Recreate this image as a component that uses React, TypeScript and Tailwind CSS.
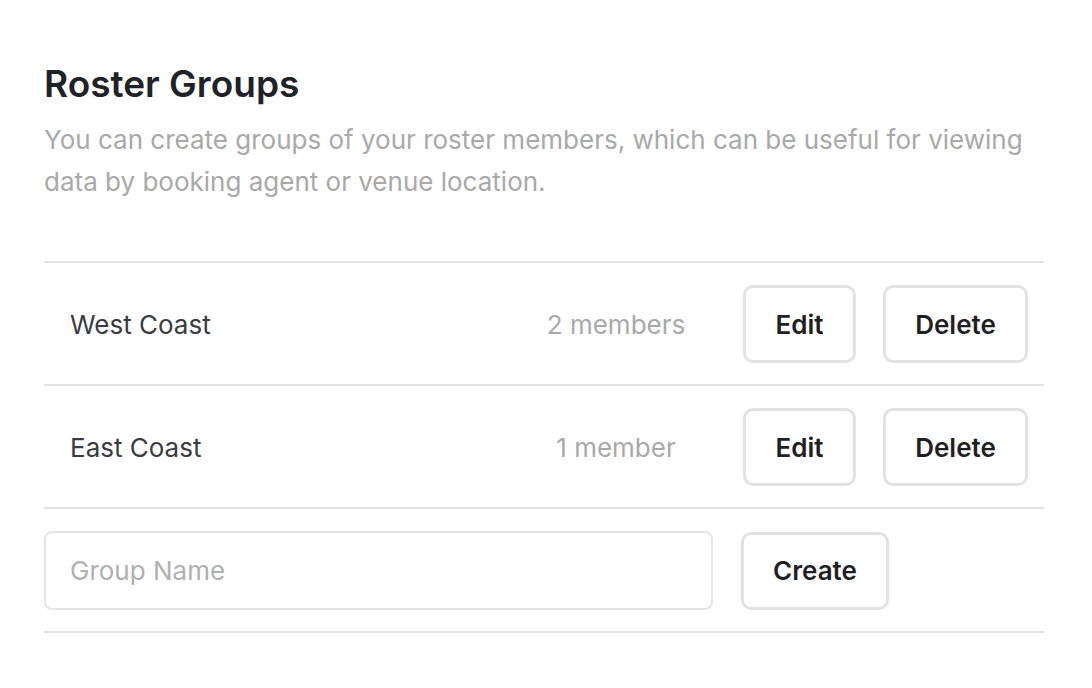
const groups = [
	{ name: "West Coast", count: "2 members" },
	{ name: "East Coast", count: "1 member" },
];

const btn =
	"h-[78px] rounded-[10px] border-[3px] border-[#e2e2e2] bg-white text-[26px] font-semibold text-[#1f2024]";

export default function App() {
	return (
		<div
			className="min-h-screen bg-white px-[44px] pt-[58px]"
			style={{ fontFamily: "Inter, 'Noto Sans', sans-serif" }}
		>
			<div className="w-[1000px]">
				<h1 className="text-[37px] font-semibold leading-[52px] text-[#1f2227]">
					Roster Groups
				</h1>
				<p className="mt-[9px] text-[26px] leading-[42px] text-[#a9a9a9]">
					You can create groups of your roster members, which can be useful for
					viewing data by booking agent or venue location.
				</p>

				<div className="mt-[58px] border-t-2 border-[#e3e3e3]">
					{groups.map((g) => (
						<div
							key={g.name}
							className="flex items-center border-b-2 border-[#e3e3e3] pb-[21px] pl-[26px] pr-[16px] pt-[22px]"
						>
							<div className="flex-1 text-[26px] text-[#3a3b42]">{g.name}</div>
							<div className="w-[200px] text-center text-[26px] text-[#a9a9a9]">
								{g.count}
							</div>
							<button className={`${btn} ml-[27px] w-[113px]`}>Edit</button>
							<button className={`${btn} ml-[27px] w-[145px]`}>Delete</button>
						</div>
					))}
					<div className="flex items-center border-b-2 border-[#e3e3e3] pb-[21px] pt-[22px]">
						<input
							placeholder="Group Name"
							className="h-[79px] w-[669px] rounded-[8px] border-2 border-[#e5e5e5] px-[24px] text-[26px] text-[#3a3b42] outline-none placeholder:text-[#b0b0b0]"
						/>
						<button className={`${btn} ml-[28px] w-[148px]`}>Create</button>
					</div>
				</div>
			</div>
		</div>
	);
}
